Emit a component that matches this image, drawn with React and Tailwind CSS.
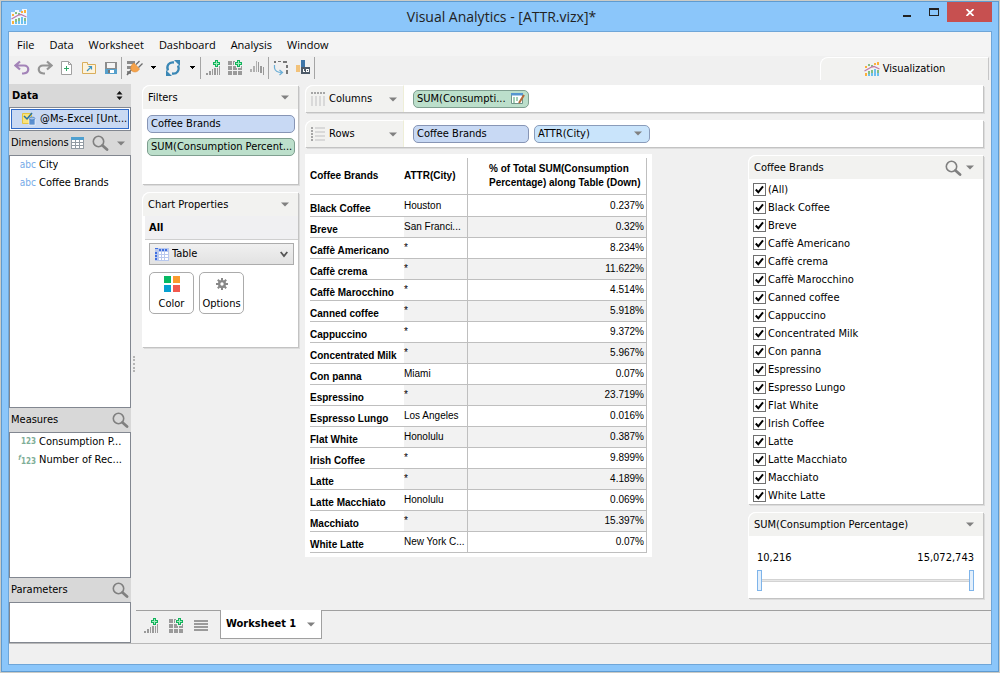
import { useState } from "react";

const rows = [
  ["Black Coffee", "Houston", "0.237%"],
  ["Breve", "San Franci...", "0.32%"],
  ["Caffè Americano", "*", "8.234%"],
  ["Caffè crema", "*", "11.622%"],
  ["Caffè Marocchino", "*", "4.514%"],
  ["Canned coffee", "*", "5.918%"],
  ["Cappuccino", "*", "9.372%"],
  ["Concentrated Milk", "*", "5.967%"],
  ["Con panna", "Miami", "0.07%"],
  ["Espressino", "*", "23.719%"],
  ["Espresso Lungo", "Los Angeles", "0.016%"],
  ["Flat White", "Honolulu", "0.387%"],
  ["Irish Coffee", "*", "9.899%"],
  ["Latte", "*", "4.189%"],
  ["Latte Macchiato", "Honolulu", "0.069%"],
  ["Macchiato", "*", "15.397%"],
  ["White Latte", "New York C...", "0.07%"],
];

const brands = [
  "(All)",
  "Black Coffee",
  "Breve",
  "Caffè Americano",
  "Caffè crema",
  "Caffè Marocchino",
  "Canned coffee",
  "Cappuccino",
  "Concentrated Milk",
  "Con panna",
  "Espressino",
  "Espresso Lungo",
  "Flat White",
  "Irish Coffee",
  "Latte",
  "Latte Macchiato",
  "Macchiato",
  "White Latte",
];

function Caret() {
  return (
    <svg width="8" height="5" viewBox="0 0 8 5" className="shrink-0">
      <path d="M0 0.5h8L4 4.5z" fill="#808080" />
    </svg>
  );
}

function SmallCaret() {
  return (
    <svg width="5" height="3" viewBox="0 0 5 3" shapeRendering="crispEdges">
      <path d="M0 0h5v1H4v1H3v1H2V2H1V1H0z" fill="#000" />
    </svg>
  );
}

function SearchIcon() {
  return (
    <svg width="17" height="16" viewBox="0 0 17 16" className="shrink-0" fill="none" stroke="#808080">
      <circle cx="6.5" cy="6.5" r="5.2" strokeWidth="1.6" />
      <path d="M10.5 10.5L15 14.5" strokeWidth="2.8" strokeLinecap="round" />
    </svg>
  );
}

function LogoIcon({ halo }) {
  return (
    <svg width="16" height="16" viewBox="0 0 16 16">
      {halo && <path d="M0 3h4V1h4v2h3V0h5v16H0z" fill="#fff" opacity="0.85" />}
      <g shapeRendering="crispEdges">
        <path d="M1 5h2v2H1zM10 2h2v2h-2zM13 1h2v3h-2zM1 12h2v3H1z" fill="#fbb03b" />
        <path d="M4 3h2v2H4zM7 4h2v2H7zM4 10h2v3H4zM7 9h2v3H7zM13 9h2v3h-2z" fill="#84bd84" />
        <path d="M4 13h2v2H4zM7 12h2v3H7zM10 8h2v7h-2zM13 12h2v3h-2z" fill="#6cc0ee" />
      </g>
      <path d="M0.5 10L7.5 6L10 5.5L15.5 8" fill="none" stroke="#c079a8" strokeWidth="1.3" />
    </svg>
  );
}

function PlusMark() {
  return (
    <g shapeRendering="crispEdges">
      <path d="M10 0h3v2h2v3h-2v2h-3V5H8V2h2z" fill="#12b35c" />
      <path d="M11 1h1v2h2v1h-2v2h-1V4H9V3h2z" fill="#a4eebf" />
    </g>
  );
}

function AddChartIcon() {
  return (
    <svg width="16" height="16" viewBox="0 0 16 16" shapeRendering="crispEdges">
      <path d="M1 13h2v2H1zM4 11h2v4H4zM7 9h1v6H7zM9 8h2v7H9zM12 8h1v7h-1zM14 6h1v9h-1z" fill="#9a9a9a" />
      <PlusMark />
    </svg>
  );
}

function AddGridIcon() {
  return (
    <svg width="16" height="16" viewBox="0 0 16 16" shapeRendering="crispEdges">
      <path
        d="M1 1h4v4H1zM6 1h2v1H7v3H6zM1 6h4v4H1zM6 6h3v2h1v2H6zM11 8h4v2h-4zM14 6h1v2h-1zM1 11h4v4H1zM6 11h4v4H6zM11 11h4v4h-4z"
        fill="#9a9a9a"
      />
      <PlusMark />
    </svg>
  );
}

function UndoIcon() {
  return (
    <svg width="16" height="16" viewBox="0 0 16 16" fill="none" stroke="#a383b8" strokeWidth="2.2">
      <path d="M6 1.5L1.5 5.5L6 9.5M2 5.5H10C15.5 5.5 16 13 9.5 13.5H8" />
    </svg>
  );
}

function RedoIcon() {
  return (
    <svg width="16" height="16" viewBox="0 0 16 16" fill="none" stroke="#949494" strokeWidth="2.2">
      <path d="M10 1.5L14.5 5.5L10 9.5M14 5.5H6C0.5 5.5 0 13 6.5 13.5H8" />
    </svg>
  );
}

function NewIcon() {
  return (
    <svg width="14" height="16" viewBox="0 0 14 16">
      <path d="M1.500 1.500H8.500L11.500 4.500V14.500H1.500z" fill="#fff" stroke="#a0a0a0" />
      <path d="M8.500 1.500V4.500H11.500" fill="none" stroke="#a0a0a0" />
      <path d="M4 8.500h5M6.500 6v5" stroke="#2fa866" />
    </svg>
  );
}

function OpenIcon() {
  return (
    <svg width="16" height="16" viewBox="0 0 16 16">
      <path d="M1.500 2.500H6.500V4.500H14.500V13.500H1.500z" fill="#fdf3dc" stroke="#d9ae5c" />
      <path d="M6 11L10.500 6.500M7.500 6.500H10.500V9.500" fill="none" stroke="#3d94c4" strokeWidth="1.200" />
    </svg>
  );
}

function SaveIcon() {
  return (
    <svg width="14" height="16" viewBox="0 0 14 16" shapeRendering="crispEdges">
      <path d="M1 2h12v8H1z" fill="#8c8c8c" />
      <path d="M3 3h8v5H3z" fill="#f4f4f4" />
      <path d="M1 9h12v5H1z" fill="#55a0cc" />
      <path d="M4 10h6v3H4z" fill="#fff" />
      <path d="M4 10h2v3H4z" fill="#777" />
    </svg>
  );
}

function ConnectIcon() {
  return (
    <svg width="18" height="16" viewBox="0 0 18 16">
      <path d="M1 1h8v3H1zM1 6h5v3H1zM1 11h4v3H1z" fill="#8b8b8b" />
      <path d="M1 15L6 9" stroke="#6f6f6f" strokeWidth="1.500" />
      <path d="M8 3L13.500 9C11.500 12.500 8 12.500 6 11C4 9 4.500 5 8 3z" fill="#f5a24a" stroke="#e08b32" strokeWidth=".6" />
      <path d="M10 4.500L13.500 1M12.500 7.500L16.500 3.500" stroke="#6d6d6d" strokeWidth="1.300" />
    </svg>
  );
}

function RefreshIcon() {
  return (
    <svg width="16" height="16" viewBox="0 0 16 16" fill="none" stroke="#3a87b5" strokeWidth="2.300">
      <path d="M9 2.500C4 1.500 1 6 3 10.500" />
      <path d="M7 13.500C12 14.500 15 10 13 5.500" />
      <path d="M9 0h6v6zM7 16H1v-6z" fill="#3a87b5" stroke="none" />
    </svg>
  );
}

function SwapBarsIcon() {
  return (
    <svg width="16" height="16" viewBox="0 0 16 16" shapeRendering="crispEdges">
      <path d="M1 9h2v3H1zM4 6h2v6H4zM7 1h1v11H7z" fill="#b0b0b0" />
      <path d="M9 2h1v10H9zM11 6h2v7h-2zM14 7h1v8h-1z" fill="#9a9a9a" />
    </svg>
  );
}

function SwapIcon() {
  return (
    <svg width="16" height="16" viewBox="0 0 16 16">
      <path d="M1 1h2v2H1zM5 1h3v1H5zM10 1h4v2h-4zM13 5h2v3h-2zM13 10h2v4h-2z" fill="#777" />
      <path d="M1.500 5V8C2 11 4 12.500 9 12.500M6.500 10L9.500 12.500L6.500 15" fill="none" stroke="#6aaed6" strokeWidth="1.200" />
    </svg>
  );
}

function LabelBarIcon() {
  return (
    <svg width="16" height="16" viewBox="0 0 16 16" shapeRendering="crispEdges">
      <path d="M1 5h4v7H1z" fill="#f2c27a" />
      <path d="M6 0h4v7H6z" fill="#3e75a8" />
      <path d="M6 7h9v7H6z" fill="#4d5a68" />
      <path d="M8 9h1v2h1v1H8zM11 9h3v3h-3zM12 10v1h1v-1z" fill="#fff" fillRule="evenodd" />
    </svg>
  );
}

function ToolButton({ label, children }) {
  return (
    <button type="button" aria-label={label} className="flex h-5 items-center justify-center">
      {children}
    </button>
  );
}

function Separator() {
  return <span className="h-[22px] w-px bg-[#a5a5a5]" />;
}

function Toolbar() {
  return (
    <div className="flex h-[23px] items-center pl-[5px]">
      <div className="flex items-center gap-[7px]">
        <ToolButton label="Undo"><UndoIcon /></ToolButton>
        <ToolButton label="Redo"><RedoIcon /></ToolButton>
        <ToolButton label="New"><NewIcon /></ToolButton>
        <ToolButton label="Open"><OpenIcon /></ToolButton>
        <ToolButton label="Save"><SaveIcon /></ToolButton>
      </div>
      <div className="ml-[3px] flex items-center gap-[4px]">
        <Separator />
        <ToolButton label="Connect"><ConnectIcon /></ToolButton>
      </div>
      <div className="ml-[7px] flex items-center gap-[9px]">
        <ToolButton label="Connect options"><SmallCaret /></ToolButton>
        <ToolButton label="Refresh"><RefreshIcon /></ToolButton>
        <ToolButton label="Refresh options"><SmallCaret /></ToolButton>
      </div>
      <div className="ml-[5px] flex items-center gap-[4px]">
        <Separator />
        <ToolButton label="Add worksheet"><AddChartIcon /></ToolButton>
      </div>
      <div className="ml-[6px] flex items-center gap-[6px]">
        <ToolButton label="Add dashboard"><AddGridIcon /></ToolButton>
        <ToolButton label="Sort"><SwapBarsIcon /></ToolButton>
      </div>
      <div className="ml-[3px] flex items-center gap-[4px]">
        <Separator />
        <ToolButton label="Swap"><SwapIcon /></ToolButton>
      </div>
      <div className="ml-[6px] flex items-center gap-[3px]">
        <ToolButton label="Show labels"><LabelBarIcon /></ToolButton>
        <Separator />
      </div>
    </div>
  );
}

function TitleBar() {
  return (
    <header className="grid h-[29px] grid-cols-[1fr_auto_1fr] pl-[3px]">
      <span className="flex items-center">
        <LogoIcon halo />
      </span>
      <h1 className="pt-1 font-['Open_Sans',sans-serif] text-[14px] leading-[22px] text-[#222]">
        Visual Analytics - [ATTR.vizx]*
      </h1>
      <div className="flex items-start justify-end">
        <button type="button" aria-label="Minimize" className="flex h-5 w-[26px] items-center justify-center">
          <span className="mt-2 h-[2px] w-2 bg-[#222]" />
        </button>
        <button type="button" aria-label="Maximize" className="flex h-5 w-[27px] items-center justify-center">
          <span className="h-2 w-[10px] border border-t-2 border-[#222]" />
        </button>
        <button type="button" aria-label="Close" className="flex h-5 w-[45px] items-center justify-center bg-[#c75050]">
          <svg width="8" height="7" viewBox="0 0 8 7">
            <path d="M.5 0L7.500 7M7.500 0L.5 7" stroke="#fff" strokeWidth="1.800" />
          </svg>
        </button>
      </div>
    </header>
  );
}

function SidebarHead({ title, children }) {
  return (
    <div className="flex h-6 items-center justify-between bg-[#d8d8d8] px-[2px]">
      <h2>{title}</h2>
      {children}
    </div>
  );
}

function Field({ kind, name }) {
  const color = kind === "abc" ? "text-[#76aae8]" : "text-[#7fae98] font-bold";
  const size = kind === "abc" ? "text-[10px]" : "text-[8px]";
  return (
    <li className="flex h-[18px] items-center">
      <span className={`w-[26px] shrink-0 text-right ${size} ${color}`}>
        {kind === "fx" && <i className="align-super text-[7px]">f</i>}
        {kind === "abc" ? "abc" : "123"}
      </span>
      <span className="ml-[3px] truncate">{name}</span>
    </li>
  );
}

function Sidebar() {
  return (
    <aside className="flex w-[122px] shrink-0 flex-col">
      <div className="flex h-[23px] items-center justify-between bg-[#d8d8d8] pr-2 pl-[3px] font-bold">
        <h2>Data</h2>
        <svg width="7" height="9" viewBox="0 0 7 9">
          <path d="M3.500 0L6.500 3.500H.5zM3.500 9L6.500 5.500H.5z" fill="#111" />
        </svg>
      </div>
      <div className="border border-[#828790] bg-white p-px">
        <button
          type="button"
          className="flex h-5 w-full items-center border border-[#2f6ac7] bg-[#c9d9f3] pl-[10px] whitespace-nowrap"
        >
          <svg width="14" height="14" viewBox="0 0 14 14" className="mr-[4px] shrink-0">
            <path d="M.5 1.500H9.500V11.500H.5z" fill="#f8e27c" stroke="#e5c440" />
            <path d="M2 4L5 7L10 1" fill="none" stroke="#2471a8" strokeWidth="1.500" />
            <path d="M7 6h6v7H7z" fill="#5b8fd0" stroke="#fff" strokeWidth=".6" />
            <ellipse cx="10" cy="6.500" rx="3" ry="1.400" fill="#a8c6ec" stroke="#4178bc" strokeWidth=".7" />
          </svg>
          @Ms-Excel [Unt...
        </button>
      </div>
      <SidebarHead title="Dimensions">
        <div className="flex grow items-center justify-end gap-2 pr-1">
          <svg width="13" height="12" viewBox="0 0 13 12" shapeRendering="crispEdges">
            <path d="M0 0h13v12H0z" fill="#929ba3" />
            <path d="M0 0h13v3H0z" fill="#4fa0d0" />
            <path d="M1 3h3v2H1zM5 3h3v2H5zM9 3h3v2H9zM1 6h3v2H1zM5 6h3v2H5zM9 6h3v2H9zM1 9h3v2H1zM5 9h3v2H5zM9 9h3v2H9z" fill="#fff" />
          </svg>
          <button type="button" aria-label="Search dimensions"><SearchIcon /></button>
          <button type="button" aria-label="Dimensions menu"><Caret /></button>
        </div>
      </SidebarHead>
      <ul className="min-h-[252px] grow border border-[#828790] bg-white">
        <Field kind="abc" name="City" />
        <Field kind="abc" name="Coffee Brands" />
      </ul>
      <SidebarHead title="Measures">
        <button type="button" aria-label="Search measures"><SearchIcon /></button>
      </SidebarHead>
      <ul className="h-[146px] border border-[#828790] bg-white">
        <Field kind="num" name="Consumption P..." />
        <Field kind="fx" name="Number of Rec..." />
      </ul>
      <SidebarHead title="Parameters">
        <button type="button" aria-label="Search parameters"><SearchIcon /></button>
      </SidebarHead>
      <div className="h-[41px] border border-[#828790] bg-white" />
    </aside>
  );
}

function Panel({ title, tools, children }) {
  return (
    <section className="rounded-tl-lg bg-white shadow-[1px_1px_0_#c3c3c3,2px_2px_0_#dcdcdc]">
      <div className="flex h-6 items-center rounded-tl-lg border-t border-l border-white bg-[#f2f2f0] pr-[9px] pl-[5px]">
        <h2 className="grow">{title}</h2>
        {tools}
        <button type="button" aria-label={`${title} menu`}><Caret /></button>
      </div>
      {children}
    </section>
  );
}

function Pill({ tone, children }) {
  const tones = {
    blue: "border-[#8795b5] bg-[#c8d9f4]",
    green: "border-[#7f9f90] bg-[#bcdfcb]",
    sky: "border-[#8a9cba] bg-[#c9e4fb]",
  };
  return (
    <button
      type="button"
      className={`flex h-[18px] w-full items-center justify-between rounded-[5px] border pr-[3px] pl-[3px] whitespace-nowrap ${tones[tone]}`}
    >
      {children}
    </button>
  );
}

function ChartProperties() {
  return (
    <Panel title="Chart Properties">
      <div className="ml-[3px] flex h-6 items-center border-b border-[#cfcfcf] bg-[#f0f0f2] pl-1 font-bold">All</div>
      <div className="pt-[3px] pr-1 pb-[33px] pl-[7px]">
        <div className="relative">
          <svg width="15" height="13" viewBox="0 0 15 13" shapeRendering="crispEdges" className="absolute top-[5px] left-[5px]">
            <path d="M1 0h14v13H1z" fill="#b8c8ee" />
            <path d="M1 0h3v1H1zM5 1h2v2H5zM8 1h2v2H8zM11 1h2v2h-2zM1 4h2v2H1zM1 7h2v2H1zM1 10h2v2H1z" fill="#3f6fe0" />
            <path d="M5 4h2v2H5zM8 4h2v2H8zM11 4h3v2h-3zM5 7h2v2H5zM8 7h2v2H8zM11 7h3v2h-3zM5 10h2v2H5zM8 10h2v2H8zM11 10h3v2h-3z" fill="#fff" />
          </svg>
          <select
            aria-label="Chart type"
            className="h-[22px] w-full appearance-none border border-[#acacac] bg-linear-to-b from-[#f0f0f0] to-[#e2e2e2] pl-[22px]"
          >
            <option>Table</option>
          </select>
          <svg width="8" height="7" viewBox="0 0 8 7" className="pointer-events-none absolute top-2 right-[6px]">
            <path d="M.7 1L4 5L7.300 1" fill="none" stroke="#555" strokeWidth="1.800" />
          </svg>
        </div>
        <div className="mt-[7px] flex gap-[5px]">
          <button type="button" className="flex h-[42px] w-[45px] flex-col items-center justify-between rounded-[5px] border border-[#ababab] bg-white pt-[3px] pb-[2px]">
            <svg width="16" height="16" viewBox="0 0 16 16" shapeRendering="crispEdges">
              <path d="M0 0h7v7H0z" fill="#07b963" />
              <path d="M9 0h7v7H9z" fill="#fb9b2e" />
              <path d="M0 9h7v7H0z" fill="#06a0d0" />
              <path d="M9 9h7v7H9z" fill="#f1594f" />
            </svg>
            Color
          </button>
          <button type="button" className="flex h-[42px] w-[45px] flex-col items-center justify-between rounded-[5px] border border-[#ababab] bg-white pt-[5px] pb-[2px]">
            <svg width="12" height="12" viewBox="0 0 12 12" fill="none" stroke="#888">
              <circle cx="6" cy="6" r="2.900" strokeWidth="2.400" />
              <path d="M6 0v2.500M6 9.500V12M0 6h2.500M9.500 6H12M1.800 1.800L3.500 3.500M8.500 8.500L10.200 10.200M1.800 10.200L3.500 8.500M8.500 3.500L10.200 1.800" strokeWidth="2" />
            </svg>
            Options
          </button>
        </div>
      </div>
    </Panel>
  );
}

function Shelf({ title, icon, children }) {
  return (
    <div className="flex h-[27px] rounded-tl-lg bg-white shadow-[1px_1px_0_#c3c3c3,2px_2px_0_#dcdcdc]">
      <div className="flex w-[99px] items-center rounded-tl-lg border-t border-r border-l border-white border-r-[#eeeed8] bg-[#f2f2f0] pr-[6px] pl-[5px]">
        {icon}
        <h2 className="ml-[3px] grow">{title}</h2>
        <button type="button" aria-label={`${title} menu`}><Caret /></button>
      </div>
      <div className="flex items-center gap-[5px] pl-[9px]">{children}</div>
    </div>
  );
}

function ColumnsIcon() {
  return (
    <svg width="15" height="14" viewBox="0 0 15 14" shapeRendering="crispEdges">
      <path d="M0 0h2v2H0zM3 0h2v2H3zM6 0h2v2H6zM9 0h2v2H9zM12 0h2v2h-2z" fill="#a6a6a6" />
      <path d="M0 4h2v10H0zM4 4h2v10H4zM8 4h2v10H8zM12 4h2v10h-2z" fill="#d9d9d9" />
    </svg>
  );
}

function RowsIcon() {
  return (
    <svg width="15" height="14" viewBox="0 0 15 14" shapeRendering="crispEdges">
      <path d="M0 0h2v2H0zM0 3h2v2H0zM0 6h2v2H0zM0 9h2v2H0zM0 12h2v2H0z" fill="#a6a6a6" />
      <path d="M4 0h10v2H4zM4 4h10v2H4zM4 8h10v2H4zM4 12h10v2H4z" fill="#d9d9d9" />
    </svg>
  );
}

function ResultTable() {
  return (
    <div className="shrink-0 bg-white px-[5px] pt-1 pb-1 font-['Liberation_Sans',sans-serif] text-[10px] leading-3">
      <table className="w-[337px] table-fixed border-separate border-spacing-0">
        <thead>
          <tr className="h-[37px] text-left">
            <th className="w-[94px] border-b border-[#bfbfbf]">Coffee Brands</th>
            <th className="w-[64px] border-r border-b border-[#bfbfbf]">ATTR(City)</th>
            <th className="border-r border-b border-[#bfbfbf] pl-[21px] leading-[14px]">
              % of Total SUM(Consumption
              <br />
              Percentage) along Table (Down)
            </th>
          </tr>
        </thead>
        <tbody>
          {rows.map(([brand, city, share], i) => {
            const shade = i % 2 ? "bg-[#f2f2f2]" : "";
            return (
              <tr key={brand} className="h-[21px] first:h-[22px]">
                <th className="border-b border-[#bfbfbf] pb-px text-left align-bottom whitespace-nowrap">{brand}</th>
                <td className={`border-r border-b border-[#bfbfbf] whitespace-nowrap ${shade}`}>{city}</td>
                <td className={`border-r border-b border-[#bfbfbf] pr-[2px] text-right ${shade}`}>{share}</td>
              </tr>
            );
          })}
        </tbody>
      </table>
    </div>
  );
}

function BrandFilter() {
  const [checked, setChecked] = useState(brands);

  const toggle = (name) => {
    if (name === "(All)") {
      setChecked(checked.includes(name) ? [] : brands);
      return;
    }
    setChecked(
      checked.includes(name) ? checked.filter((b) => b !== name && b !== "(All)") : [...checked, name]
    );
  };

  return (
    <Panel
      title="Coffee Brands"
      tools={<button type="button" aria-label="Search brands" className="mr-[4px]"><SearchIcon /></button>}
    >
      <ul className="pt-px">
        {brands.map((name) => (
          <li key={name}>
            <label className="flex h-[18px] items-center gap-[2px] pl-[5px]">
              <span className="grid">
                <input
                  type="checkbox"
                  checked={checked.includes(name)}
                  onChange={() => toggle(name)}
                  className="peer col-start-1 row-start-1 size-[13px] appearance-none border border-[#707070] bg-white"
                />
                <svg
                  width="13"
                  height="13"
                  viewBox="0 0 13 13"
                  className="pointer-events-none invisible col-start-1 row-start-1 peer-checked:visible"
                >
                  <path d="M2.800 6.500L5.300 9.300L10 3.300" fill="none" stroke="#000" strokeWidth="2" />
                </svg>
              </span>
              <span className="pt-px">{name}</span>
            </label>
          </li>
        ))}
      </ul>
    </Panel>
  );
}

const thumb =
  "pointer-events-none col-start-1 row-start-1 h-5 w-full appearance-none bg-transparent [&::-webkit-slider-thumb]:pointer-events-auto [&::-webkit-slider-thumb]:h-[21px] [&::-webkit-slider-thumb]:w-[5px] [&::-webkit-slider-thumb]:appearance-none [&::-webkit-slider-thumb]:border [&::-webkit-slider-thumb]:border-[#7eb4ea] [&::-webkit-slider-thumb]:bg-[#e3effb]";

function RangeFilter() {
  const [low, setLow] = useState(10216);
  const [high, setHigh] = useState(15072743);

  return (
    <Panel title="SUM(Consumption Percentage)">
      <div className="pt-[15px] pr-[9px] pb-2 pl-[9px]">
        <div className="flex h-[14px] items-center justify-between">
          <span>{low.toLocaleString("en-US")}</span>
          <span>{high.toLocaleString("en-US")}</span>
        </div>
        <div className="mt-[5px] grid items-center">
          <div className="col-start-1 row-start-1 h-[3px] border-y border-[#d3d3d3] bg-[#e7e7e7]" />
          <input
            type="range"
            aria-label="Lowest value"
            min="10216"
            max="15072743"
            value={low}
            onChange={(e) => setLow(Math.min(Number(e.target.value), high))}
            className={thumb}
          />
          <input
            type="range"
            aria-label="Highest value"
            min="10216"
            max="15072743"
            value={high}
            onChange={(e) => setHigh(Math.max(Number(e.target.value), low))}
            className={thumb}
          />
        </div>
      </div>
    </Panel>
  );
}

function SheetTabs() {
  return (
    <footer className="flex h-[33px] items-start border-t border-[#a0a0a0]">
      <div className="flex items-center gap-[9px] pt-[5px] pl-[7px]">
        <ToolButton label="New worksheet"><AddChartIcon /></ToolButton>
        <ToolButton label="New dashboard"><AddGridIcon /></ToolButton>
        <ToolButton label="All sheets">
          <svg width="16" height="16" viewBox="0 0 16 16" shapeRendering="crispEdges">
            <path d="M1 2h14v2H1zM1 5h14v2H1zM1 8h14v2H1zM1 11h14v2H1z" fill="#9a9a9a" />
          </svg>
        </ToolButton>
      </div>
      <button
        type="button"
        className="-mt-px ml-[11px] flex h-[29px] items-center gap-[11px] border border-t-0 border-[#a0a0a0] bg-white pr-[6px] pl-[5px] font-bold"
      >
        Worksheet 1
        <Caret />
      </button>
    </footer>
  );
}

export default function App() {
  return (
    <div className="flex min-h-screen flex-col border border-[#cbcbc6] bg-[#8bc6fa] font-['DejaVu_Sans_Condensed','DejaVu_Sans',sans-serif] text-[11px] leading-[14px] text-black">
      <div className="flex grow flex-col border border-[#5f9bd0] px-[6px] pb-[6px]">
        <TitleBar />
        <div className="flex grow flex-col border border-[#6fa6d8] bg-[#f0f0f0]">
          <nav className="flex h-6 items-center gap-[15px] bg-[#f4f4f4] pt-px pl-2 font-['Open_Sans',sans-serif]">
            {["File", "Data", "Worksheet", "Dashboard", "Analysis", "Window"].map((item) => (
              <button key={item} type="button">{item}</button>
            ))}
          </nav>
          <div className="flex h-7 justify-between">
            <Toolbar />
            <div className="mt-px mr-[2px] flex h-[23px] w-[169px] items-center justify-center gap-[3px] rounded-tl-lg border-t border-r border-l border-white border-r-[#c6c6c6] bg-[#f2f2f0]">
              <LogoIcon />
              <span>Visualization</span>
            </div>
          </div>

          <div className="flex grow">
            <Sidebar />
            <div className="flex w-[5px] items-center justify-end pr-px">
              <span className="h-4 border-r-2 border-dotted border-[#b5b5b5]" />
            </div>
            <div className="flex min-w-0 grow flex-col">
              <div className="flex grow pt-px pr-2 pl-[6px]">
                <div className="flex w-[156px] shrink-0 flex-col gap-2">
                  <Panel title="Filters">
                    <div className="flex flex-col gap-[5px] pt-[6px] pr-[3px] pb-7 pl-[5px]">
                      <Pill tone="blue">Coffee Brands</Pill>
                      <Pill tone="green">SUM(Consumption Percent...</Pill>
                    </div>
                  </Panel>
                  <ChartProperties />
                </div>

                <main className="ml-[7px] flex min-w-0 grow flex-col">
                  <div className="flex flex-col gap-2">
                    <Shelf title="Columns" icon={<ColumnsIcon />}>
                      <div className="w-[116px]">
                        <Pill tone="green">
                          SUM(Consumpti...
                          <svg width="14" height="13" viewBox="0 0 14 13">
                            <path d="M.5 1.500H11.500V11.500H.5z" fill="#fff" stroke="#6f9488" />
                            <path d="M0 1h12v2.500H0z" fill="#5596cf" />
                            <path d="M2 6h2M5 6h2M2 8h2M5 8h2M2 10h2" stroke="#49a06c" />
                            <path d="M13 3L8 11" stroke="#b56b3a" strokeWidth="2" />
                          </svg>
                        </Pill>
                      </div>
                    </Shelf>
                    <Shelf title="Rows" icon={<RowsIcon />}>
                      <div className="w-[116px]">
                        <Pill tone="blue">Coffee Brands</Pill>
                      </div>
                      <div className="w-[116px]">
                        <Pill tone="sky">
                          ATTR(City)
                          <span className="pr-1"><Caret /></span>
                        </Pill>
                      </div>
                    </Shelf>
                  </div>
                  <div className="mt-[7px] flex items-start justify-between">
                    <ResultTable />
                    <div className="flex w-[235px] flex-col gap-2 pt-px">
                      <BrandFilter />
                      <RangeFilter />
                    </div>
                  </div>
                </main>
              </div>
              <SheetTabs />
            </div>
          </div>
          <div className="h-[21px] border-t border-[#b8b8b8]" />
        </div>
      </div>
    </div>
  );
}
